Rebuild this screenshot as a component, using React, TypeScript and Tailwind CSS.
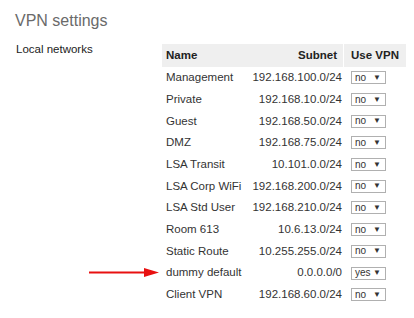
const rows: { name: string; subnet: string; vpn: string }[] = [
  { name: 'Management', subnet: '192.168.100.0/24', vpn: 'no' },
  { name: 'Private', subnet: '192.168.10.0/24', vpn: 'no' },
  { name: 'Guest', subnet: '192.168.50.0/24', vpn: 'no' },
  { name: 'DMZ', subnet: '192.168.75.0/24', vpn: 'no' },
  { name: 'LSA Transit', subnet: '10.101.0.0/24', vpn: 'no' },
  { name: 'LSA Corp WiFi', subnet: '192.168.200.0/24', vpn: 'no' },
  { name: 'LSA Std User', subnet: '192.168.210.0/24', vpn: 'no' },
  { name: 'Room 613', subnet: '10.6.13.0/24', vpn: 'no' },
  { name: 'Static Route', subnet: '10.255.255.0/24', vpn: 'no' },
  { name: 'dummy default', subnet: '0.0.0.0/0', vpn: 'yes' },
  { name: 'Client VPN', subnet: '192.168.60.0/24', vpn: 'no' },
]

function VpnSelect({ value }: { value: string }) {
  return (
    <div className="flex items-center justify-between w-[35px] h-[13px] border border-[#b0b0b0] bg-white pl-[3px] pr-[4px] text-[10px] leading-none text-[#333]">
      <span>{value}</span>
      <span className="text-[8px]">▼</span>
    </div>
  )
}

export default function App() {
  return (
    <div className="relative w-[414px] h-[318px] bg-white font-['Liberation_Sans',Arial,sans-serif] text-[#333] overflow-hidden">
      <h1 className="pl-[15px] pt-[12px] text-[16px] leading-[18px] text-[#6a6a6a] font-normal">
        VPN settings
      </h1>

      <div className="flex mt-[12px]">
        <div className="w-[162px] shrink-0 pl-[16px] text-[11.5px] leading-[14px] text-[#222]">
          Local networks
        </div>

        <div className="mt-[2px] w-[244px] text-[11.5px]">
          {/* header */}
          <div className="grid grid-cols-[83px_99px_62px] h-[23px] items-center bg-[#efefef] font-bold text-[#222]">
            <div className="pl-[4px]">Name</div>
            <div className="text-right pr-[6px] h-full flex items-center justify-end border-r border-white">Subnet</div>
            <div className="pl-[7px]">Use VPN</div>
          </div>

          {rows.map((r) => (
            <div key={r.name} className="grid grid-cols-[83px_99px_62px] h-[21.7px] items-center">
              <div className="pl-[4px] whitespace-nowrap">{r.name}</div>
              <div className="text-right pr-[2px] whitespace-nowrap">{r.subnet}</div>
              <div className="pl-[7px]">
                <VpnSelect value={r.vpn} />
              </div>
            </div>
          ))}
        </div>
      </div>

      {/* annotation arrow */}
      <svg className="absolute left-[89px] top-[267px]" width="71" height="11" viewBox="0 0 71 11">
        <line x1="0" y1="5.5" x2="57" y2="5.5" stroke="#e81010" strokeWidth="2" />
        <polygon points="55,1 70,5.5 55,10" fill="#e81010" />
      </svg>
    </div>
  )
}
